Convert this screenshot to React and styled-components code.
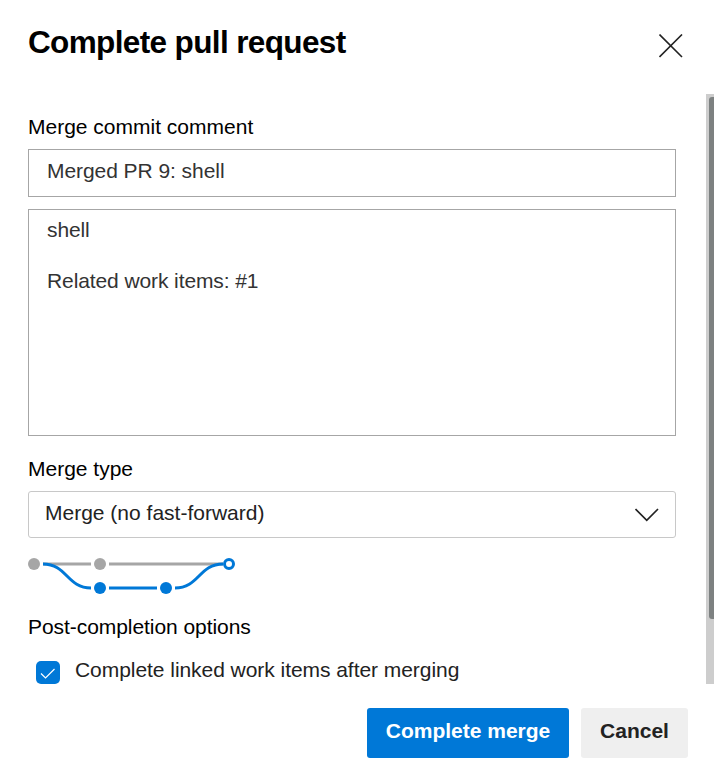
import React from "react";
import styled, { createGlobalStyle } from "styled-components";

const GlobalStyle = createGlobalStyle`
  * { box-sizing: border-box; }
  body { margin: 0; background: #fff; }
`;

const Dialog = styled.main`
  display: flex;
  flex-direction: column;
  width: 714px;
  height: 776px;
  overflow: hidden;
  background: #fff;
  color: #000;
  font: 21px/26px "Liberation Sans", Arial, sans-serif;
`;

const Header = styled.header`
  display: flex;
  flex: 0 0 94px;
  align-items: flex-start;
  justify-content: space-between;
  padding: 24px 31px 0 28px;
`;

const Title = styled.h1`
  margin: 0;
  font-size: 31.5px;
  line-height: 36px;
  font-weight: 700;
  letter-spacing: -0.63px;
`;

const IconButton = styled.button`
  display: flex;
  margin: 10px 0 0;
  padding: 0;
  border: 0;
  background: none;
  color: #222;
`;

const Viewport = styled.div`
  display: flex;
  flex: 0 0 590px;
  overflow: hidden;
`;

const Content = styled.section`
  flex: 1;
  padding: 20px 30px 0 28px;
`;

const Track = styled.div`
  flex: 0 0 8px;
  padding: 3px 0 0 3px;
  background: #cdcdcd;
`;

const Thumb = styled.div`
  height: 522px;
  border-radius: 3px 0 0 3px;
  background: #7d8181;
`;

const Label = styled.label`
  display: block;
  height: 35px;
`;

const SectionTitle = styled.h2`
  height: 35px;
  margin: 0;
  font: inherit;
  letter-spacing: -0.06px;
`;

const TextInput = styled.input`
  display: block;
  width: 648px;
  height: 48px;
  padding: 0 18px 4px;
  border: 1px solid #a6a6a6;
  border-radius: 0;
  outline: 0;
  background: #fff;
  color: #333;
  font: inherit;
  letter-spacing: -0.06px;
`;

const TextArea = styled.textarea`
  display: block;
  width: 648px;
  height: 227px;
  margin: 12px 0 20px;
  padding: 7px 18px;
  border: 1px solid #a6a6a6;
  border-radius: 0;
  outline: 0;
  resize: none;
  overflow: hidden;
  background: #fff;
  color: #333;
  font: inherit;
  line-height: 25.5px;
  letter-spacing: -0.1px;
`;

const Dropdown = styled.div`
  display: flex;
  align-items: center;
  justify-content: space-between;
  width: 648px;
  height: 47px;
  padding: 0 16px 3px;
  border: 1px solid #c8c8c8;
  border-radius: 3px;
  color: #222;
`;

const Chevron = styled.svg`
  display: block;
  margin-top: 3px;
`;

const Graph = styled.svg`
  display: block;
  margin: 16px 0 20px;
`;

const Option = styled.div`
  display: flex;
  gap: 15px;
  margin-top: 8px;
  padding-left: 8px;
  color: #222;
  letter-spacing: -0.05px;
`;

const Check = styled.span`
  display: flex;
  align-items: center;
  justify-content: center;
  width: 24px;
  height: 23px;
  margin-top: 4px;
  border-radius: 5px;
  background: #0078d7;
`;

const Footer = styled.footer`
  display: flex;
  flex: 1;
  align-items: flex-start;
  justify-content: flex-end;
  gap: 12px;
  padding: 24px 26px 0 0;
`;

const Button = styled.button`
  width: ${({ $primary }) => ($primary ? 202 : 107)}px;
  height: 50px;
  padding: 0 0 4px;
  border: 0;
  border-radius: 3px;
  background: ${({ $primary }) => ($primary ? "#0078d7" : "#efefef")};
  color: ${({ $primary }) => ($primary ? "#fff" : "#222")};
  font: inherit;
  font-weight: 700;
`;

function MergeGraph() {
  return (
    <Graph width="208" height="40" fill="none" strokeWidth="3">
      <path d="M15 10H63M81 10H195" stroke="#a6a6a6" />
      <path d="M15 10C39 10 39 34 63 34M81 34H129M147 34C171 34 171 10 195 10" stroke="#0078d7" />
      <circle cx="6" cy="10" r="6" fill="#a6a6a6" />
      <circle cx="72" cy="10" r="6" fill="#a6a6a6" />
      <circle cx="72" cy="34" r="6" fill="#0078d7" />
      <circle cx="138" cy="34" r="6" fill="#0078d7" />
      <circle cx="201" cy="10" r="4.5" fill="#fff" stroke="#0078d7" />
    </Graph>
  );
}

export default function App() {
  return (
    <>
      <GlobalStyle />
      <Dialog>
        <Header>
          <Title>Complete pull request</Title>
          <IconButton aria-label="Close">
            <svg width="24" height="24" fill="none" stroke="currentColor" strokeWidth="1.6">
              <path d="M0.5 0.5L23 23M23 0.5L0.5 23" />
            </svg>
          </IconButton>
        </Header>
        <Viewport>
          <Content>
            <Label htmlFor="title">Merge commit comment</Label>
            <TextInput id="title" defaultValue="Merged PR 9: shell" />
            <TextArea spellCheck={false} defaultValue={"shell\n\nRelated work items: #1"} />
            <Label as="div">Merge type</Label>
            <Dropdown>
              <span>Merge (no fast-forward)</span>
              <Chevron width="24" height="14" fill="none" stroke="currentColor" strokeWidth="1.7">
                <path d="M0.5 1L11.75 12.25L23 1" />
              </Chevron>
            </Dropdown>
            <MergeGraph />
            <SectionTitle>Post-completion options</SectionTitle>
            <Option>
              <Check>
                <svg width="16" height="12" fill="none" stroke="#fff" strokeWidth="1.2">
                  <path d="M1 6.5L5.5 11L14.5 2" />
                </svg>
              </Check>
              <span>Complete linked work items after merging</span>
            </Option>
          </Content>
          <Track>
            <Thumb />
          </Track>
        </Viewport>
        <Footer>
          <Button $primary>Complete merge</Button>
          <Button>Cancel</Button>
        </Footer>
      </Dialog>
    </>
  );
}
